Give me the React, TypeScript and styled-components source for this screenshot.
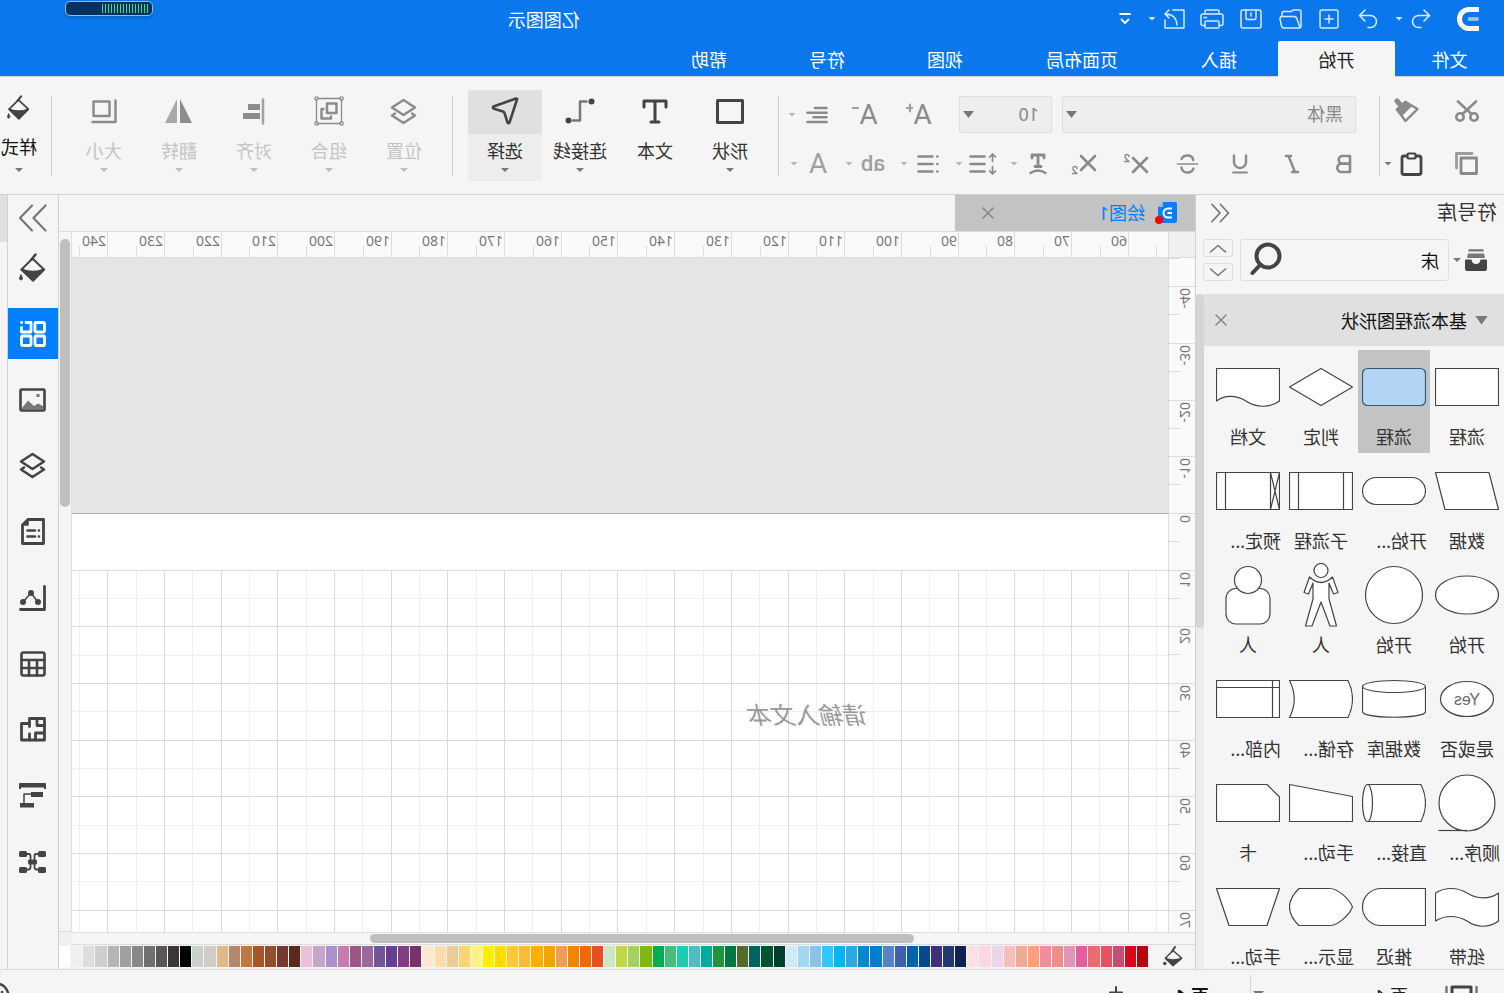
import React, { useEffect, useState } from "react";
import styled, { createGlobalStyle, css } from "styled-components";

const GlobalStyle = createGlobalStyle`
  * { box-sizing: border-box; }
  body {
    margin: 0;
    overflow: hidden;
    font-family: "Noto Sans", "Noto Sans CJK SC", sans-serif;
    font-size: 18px;
    color: #333;
    background: #f5f5f5;
  }
  button, select, input {
    font: inherit;
    color: inherit;
    margin: 0;
    padding: 0;
    border: 0;
    background: none;
  }
  svg { display: block; flex: none; }
`;

/* The whole window is shown flipped left to right. */
const Window = styled.div`
  display: flex;
  flex-direction: column;
  height: 100vh;
  overflow: hidden;
  background: #f5f5f5;
  transform: scaleX(-1);
`;

const Caret = styled.span<{ $w?: number; $h?: number; $color?: string }>`
  flex: none;
  width: ${(p) => p.$w ?? 8}px;
  height: ${(p) => p.$h ?? 4}px;
  background: ${(p) => p.$color ?? "#777"};
  clip-path: polygon(0 0, 100% 0, 50% 100%);
`;

const Spacer = styled.div<{ $grow?: number }>`
  flex: ${(p) => p.$grow ?? 1} 1 0;
`;

/* ---------- title bar ---------- */

const TitleBar = styled.header`
  flex: none;
  display: flex;
  align-items: center;
  height: 41px;
  padding: 0 65px 4px 25px;
  background: #0a77ec;
  color: #fff;
`;

const QuickBar = styled.div`
  display: flex;
  align-items: center;
  margin-left: 17px;
`;

const QuickButton = styled.button<{ $w?: number }>`
  display: flex;
  align-items: center;
  justify-content: center;
  width: ${(p) => p.$w ?? 39}px;
  height: 28px;
`;

const Gap = styled.span<{ $w: number }>`
  flex: none;
  width: ${(p) => p.$w}px;
`;

const AppTitle = styled.h1`
  margin: 2px 0 0;
  font-size: 18px;
  font-weight: 400;
  line-height: 26px;
`;

const Meter = styled.div`
  align-self: flex-start;
  display: flex;
  align-items: center;
  width: 88px;
  height: 15px;
  margin-top: 1px;
  padding: 0 4px;
  border: 1px solid #8dbcf5;
  border-radius: 5px;
  background: #04325f;
  box-shadow: 0 2px 3px rgba(0, 0, 0, 0.15);
`;

const MeterLevel = styled.div`
  width: 46px;
  height: 9px;
  background: repeating-linear-gradient(90deg, #3fdc86 0 1px, transparent 1px 3px);
`;

/* ---------- tabs ---------- */

const TabBar = styled.nav`
  flex: none;
  display: flex;
  height: 35px;
  background: #0a77ec;
`;

const Tab = styled.button<{ $w?: number; $active?: boolean }>`
  position: relative;
  z-index: 1;
  flex: none;
  width: ${(p) => p.$w ?? 118}px;
  height: 36px;
  border-radius: 2px 2px 0 0;
  color: ${(p) => (p.$active ? "#222" : "#fff")};
  background: ${(p) => (p.$active ? "#f5f5f5" : "none")};
`;

/* ---------- ribbon ---------- */

const Ribbon = styled.section`
  flex: none;
  display: flex;
  height: 119px;
  overflow: hidden;
  border-top: 1px solid #d2d4d8;
  border-bottom: 1px solid #d2d2d2;
  background: #f5f5f5;
`;

const Rule = styled.div`
  flex: none;
  width: 1px;
  height: 80px;
  margin-top: 19px;
  background: #d0d0d0;
`;

const RowGroup = styled.div<{ $w: number; $top: number; $gap: number; $left: number }>`
  flex: none;
  display: flex;
  flex-direction: column;
  gap: ${(p) => p.$gap}px;
  width: ${(p) => p.$w}px;
  padding: ${(p) => p.$top}px 0 0 ${(p) => p.$left}px;
  color: #8a8a8a;
`;

const Row = styled.div<{ $gap?: number; $left?: number }>`
  display: flex;
  align-items: center;
  gap: ${(p) => p.$gap ?? 0}px;
  height: 37px;
  padding-left: ${(p) => p.$left ?? 0}px;
`;

const IconButton = styled.button<{ $w: number }>`
  flex: none;
  display: flex;
  align-items: center;
  justify-content: center;
  width: ${(p) => p.$w}px;
  height: 37px;
`;

const SplitButton = styled.button<{ $w: number; $dim?: boolean }>`
  flex: none;
  display: flex;
  align-items: center;
  width: ${(p) => p.$w}px;
  height: 37px;
  color: ${(p) => (p.$dim ? "#a0a0a0" : "inherit")};
`;

const SplitFace = styled.span`
  flex: 1;
  display: flex;
  align-items: center;
  justify-content: center;
`;

const Glyph = styled.span<{ $size: number; $weight?: number }>`
  font-family: Roboto, sans-serif;
  font-size: ${(p) => p.$size}px;
  font-weight: ${(p) => p.$weight ?? 400};
  line-height: 28px;
`;

const SelectBox = styled.label<{ $w: number }>`
  position: relative;
  flex: none;
  display: flex;
  width: ${(p) => p.$w}px;
  height: 37px;
  border: 1px solid #dddee2;
  border-radius: 2px;
  background: #eee;

  select {
    width: 100%;
    padding: 0 20px 2px 12px;
    appearance: none;
    outline: 0;
  }

  ${Caret} {
    position: absolute;
    top: 14px;
    right: 3px;
    pointer-events: none;
  }
`;

const ToolGroup = styled.div<{ $left?: number }>`
  flex: none;
  display: flex;
  gap: 1px;
  padding: 13px 15px 0 ${(p) => p.$left ?? 11}px;
`;

const ToolIcon = styled.span<{ $active?: boolean }>`
  display: flex;
  align-items: center;
  justify-content: center;
  width: 100%;
  height: 44px;
  padding-bottom: 2px;
  color: #444;
  ${(p) => p.$active && css`background: #e0e0e0;`}
`;

const ToolLabel = styled.span`
  line-height: 34px;
`;

const Tool = styled.button<{ $w?: number; $active?: boolean; $disabled?: boolean; $raised?: boolean }>`
  flex: none;
  display: flex;
  flex-direction: column;
  align-items: center;
  width: ${(p) => p.$w ?? 74}px;
  height: 91px;
  border-radius: 2px;
  overflow: hidden;
  white-space: nowrap;
  color: ${(p) => (p.$disabled ? "#c4c4c4" : "#333")};
  ${(p) => p.$active && css`background: #ededed;`}
  ${(p) =>
    p.$raised &&
    css`
      color: #111;
      ${ToolIcon} { height: 36px; }
      ${ToolLabel} { line-height: 42px; }
    `}
`;

/* ---------- workspace ---------- */

const Workspace = styled.main`
  flex: 1;
  display: flex;
  min-height: 0;
`;

const LibraryPanel = styled.aside`
  flex: none;
  display: flex;
  flex-direction: column;
  width: 309px;
  border-right: 1px solid #d0d0d0;
`;

const PanelHead = styled.div`
  flex: none;
  display: flex;
  align-items: center;
  justify-content: space-between;
  height: 36px;
  padding: 0 15px 0 7px;

  h2 {
    margin: 0;
    font-size: 20px;
    font-weight: 400;
    line-height: 36px;
  }
`;

const PlainButton = styled.button`
  display: flex;
  align-items: center;
  justify-content: center;
  color: #777;
`;

const SearchRow = styled.div`
  flex: none;
  display: flex;
  align-items: center;
  height: 42px;
  margin: 8px 7px 13px 17px;
`;

const LibraryButton = styled.button`
  display: flex;
  align-items: center;
  gap: 4px;
  width: 38px;
`;

const SearchBox = styled.label`
  flex: 1;
  display: flex;
  align-items: center;
  min-width: 0;
  height: 42px;
  margin-right: 7px;
  padding: 0 9px 2px 9px;
  border: 1px solid #e0e0e0;
  border-radius: 3px;

  input {
    flex: 1;
    min-width: 0;
    padding-top: 2px;
    outline: 0;
    color: #111;
  }
`;

const Steppers = styled.div`
  display: flex;
  flex-direction: column;
  gap: 6px;
`;

const Stepper = styled.button`
  display: flex;
  align-items: center;
  justify-content: center;
  width: 30px;
  height: 18px;
  border: 1px solid #dedede;
  border-radius: 3px;
`;

const LibraryBody = styled.div`
  flex: 1;
  display: flex;
  min-height: 0;
`;

const LibraryScroll = styled.div`
  flex: 1;
  overflow: hidden;
`;

const SectionHead = styled.div`
  display: flex;
  align-items: center;
  height: 52px;
  padding: 0 11px 0 16px;
  background: #e0e0e0;
  color: #111;

  h3 {
    flex: 1;
    margin: 0 0 0 8px;
    font-size: 18px;
    font-weight: 400;
  }
`;

const ShapeGrid = styled.div`
  display: grid;
  grid-template-columns: repeat(4, 72px);
  gap: 1px;
  padding: 4px 0 0 1px;
`;

const ShapeCell = styled.button<{ $active?: boolean }>`
  display: flex;
  flex-direction: column;
  align-items: center;
  height: 103px;
  padding-top: 5px;
  background: ${(p) => (p.$active ? "#c3c3c3" : "none")};
`;

const ShapeLabel = styled.span<{ $cut?: boolean }>`
  align-self: ${(p) => (p.$cut ? "flex-start" : "center")};
  padding-left: ${(p) => (p.$cut ? 3 : 0)}px;
  line-height: 36px;
  white-space: nowrap;
`;

const LibraryTrack = styled.div`
  flex: none;
  width: 8px;
  background: #ececec;
`;

const LibraryThumb = styled.div`
  height: 334px;
  border-radius: 4px;
  background: #d5d5d5;
`;

/* ---------- document ---------- */

const DocArea = styled.section`
  flex: 1;
  display: flex;
  flex-direction: column;
  min-width: 0;
`;

const DocTabs = styled.div`
  flex: none;
  display: flex;
  height: 37px;
  border-bottom: 1px solid #dcdcdc;
`;

const DocTab = styled.div`
  display: flex;
  align-items: center;
  width: 240px;
  padding: 0 27px 0 18px;
  background: #c3c3c3;
  color: #0080ff;

  span {
    flex: 1;
    margin-left: 9px;
    padding-bottom: 2px;
  }
`;

const DocBody = styled.div`
  flex: 1;
  display: grid;
  grid-template-columns: 27px minmax(0, 1fr) 13px;
  grid-template-rows: 26px minmax(0, 1fr) 13px;
  min-height: 0;
`;

const RulerCorner = styled.div`
  border-right: 1px solid #dcdcdc;
  border-bottom: 1px solid #dcdcdc;
  background: #f0f0f0;
`;

const TopRuler = styled.div`
  display: flex;
  overflow: hidden;
  border-bottom: 1px solid #dcdcdc;
  background: #fafafa;
`;

const TopLead = styled.div`
  flex: none;
  width: 39px;
  background: linear-gradient(#dcdcdc, #dcdcdc) 11px 100% / 1px 11px no-repeat;
`;

const TopCell = styled.div`
  flex: none;
  border-left: 1px solid #dcdcdc;
  padding-left: 1px;
  font-size: 14px;
  line-height: 18px;
  color: #777;
  background: linear-gradient(#dcdcdc, #dcdcdc) 27px 100% / 1px 11px no-repeat;
`;

const SideRuler = styled.div`
  overflow: hidden;
  border-right: 1px solid #dcdcdc;
  background: #fafafa;
`;

const SideLead = styled.div`
  height: 28px;
  background: linear-gradient(#dcdcdc, #dcdcdc) 100% 0 / 11px 1px no-repeat;
`;

const SideCell = styled.div`
  border-top: 1px solid #dcdcdc;
  padding: 1px 0 0 1px;
  font-size: 14px;
  line-height: 18px;
  color: #777;
  background: linear-gradient(#dcdcdc, #dcdcdc) 100% 27px / 11px 1px no-repeat;

  span {
    display: block;
    writing-mode: vertical-rl;
    transform: rotate(180deg);
    width: 18px;
  }
`;

const Canvas = styled.div`
  position: relative;
  overflow: hidden;
  background: #fff;

  svg {
    position: absolute;
    inset: 0;
  }
`;

const CanvasText = styled.div`
  position: absolute;
  left: 299px;
  top: 439px;
  font-size: 24px;
  font-style: italic;
  line-height: 36px;
  color: #999;
`;

const VerticalTrack = styled.div`
  grid-row: 1 / 3;
  grid-column: 3;
  padding: 7px 1px 0;
  border-left: 1px solid #e0e0e0;
  border-bottom: 1px solid #dcdcdc;
`;

const VerticalThumb = styled.div`
  height: 268px;
  border-radius: 5px;
  background: #bfbfbf;
`;

const HorizontalTrack = styled.div`
  grid-column: 1 / 3;
  padding: 1px 0;
  border-top: 1px solid #dcdcdc;
  border-bottom: 1px solid #dcdcdc;
`;

const HorizontalThumb = styled.div`
  width: 48.5%;
  margin-left: 25%;
  height: 9px;
  border-radius: 5px;
  background: #bfbfbf;
`;

const TrackCorner = styled.div`
  background: #f0f0f0;
`;

const Palette = styled.div`
  flex: none;
  display: flex;
  align-items: center;
  gap: 15px;
  height: 24px;
  padding: 0 0 2px 12px;
`;

const Swatches = styled.div`
  flex: 1;
  display: flex;
  gap: 1px;
`;

const Swatch = styled.button<{ $color: string }>`
  flex: 1 1 0;
  height: 21px;
  background: ${(p) => p.$color};
`;

/* ---------- right rail ---------- */

const Rail = styled.aside`
  flex: none;
  display: flex;
  flex-direction: column;
  align-items: center;
  gap: 15px;
  width: 52px;
  border-left: 1px solid #d0d0d0;
  border-right: 1px solid #d0d0d0;
`;

const RailToggle = styled.button`
  display: flex;
  align-items: center;
  justify-content: center;
  width: 50px;
  height: 32px;
  margin: 7px 0 -7px;
  color: #777;
`;

const RailButton = styled.button<{ $active?: boolean }>`
  flex: none;
  display: flex;
  align-items: center;
  justify-content: center;
  width: 50px;
  height: 51px;
  color: ${(p) => (p.$active ? "#fff" : "#444")};
  background: ${(p) => (p.$active ? "#0080ff" : "none")};
`;

const Edge = styled.div`
  flex: none;
  width: 7px;
  background: linear-gradient(#e0e0e0, #e0e0e0) 0 0 / 100% 47px no-repeat;
`;

/* ---------- status bar ---------- */

const StatusBar = styled.footer`
  flex: none;
  height: 24px;
  overflow: hidden;
  border-top: 1px solid #dadada;
`;

const StatusRow = styled.div`
  display: flex;
  align-items: center;
  height: 52px;
  padding-left: 26px;
  white-space: nowrap;
`;

const PageSelect = styled.button`
  display: flex;
  align-items: center;
  justify-content: space-between;
  width: 155px;
  margin: 0 2px 0 37px;
  line-height: 28px;
  color: #222;

  ${Caret} {
    margin-bottom: 4px;
  }
`;

const StatusRule = styled.div`
  width: 1px;
  height: 42px;
  background: #d6d6d6;
`;

const PageTab = styled.button`
  margin: 0 52px 0 41px;
  font-weight: 700;
  line-height: 28px;
  color: #111;
`;

const HelpButton = styled.button`
  flex: none;
  margin-right: -18px;
  color: #444;
`;

/* ---------- icons ---------- */

type IconProps = {
  w: number;
  h: number;
  sw?: number;
  color?: string;
  box?: string;
  children: React.ReactNode;
};

function Icon({ w, h, sw = 2, color = "currentColor", box, children }: IconProps) {
  return (
    <svg
      width={w}
      height={h}
      viewBox={box ?? `0 0 ${w} ${h}`}
      fill="none"
      stroke={color}
      strokeWidth={sw}
      strokeLinecap="round"
      strokeLinejoin="round"
      aria-hidden="true"
    >
      {children}
    </svg>
  );
}

const Bucket = ({ w = 27, h = 29 }: { w?: number; h?: number }) => (
  <Icon w={w} h={h} box="0 0 27 29" sw={2}>
    <path d="M13.5 5.5L2 16.5L13 27.5L24.5 16.5Z" />
    <path d="M2 16.5Q13 21 24.5 16.5L13 27.5Z" fill="currentColor" />
    <path d="M10.5 1.5L14.5 6.5" strokeWidth={2.5} />
    <path d="M25 22Q28 26.500 25 27Q22 26.500 25 22Z" fill="currentColor" strokeWidth={1} />
  </Icon>
);

const Cross = () => (
  <Icon w={12} h={12} sw={1.5} color="#858585">
    <path d="M1 1L11 11M11 1L1 11" />
  </Icon>
);

const layersIcon = (
  <>
    <path d="M13.5 2L25 9.5L13.5 17L2 9.5Z" />
    <path d="M5 15.5L2 17.5L13.5 25L25 17.5L22 15.5" />
  </>
);

/* ---------- symbol previews ---------- */

const shapes: { label: string; cut?: boolean; active?: boolean; art: React.ReactNode }[] = [
  { label: "流程", art: <path d="M.5 13.5H63.5V50.5H.5Z" /> },
  {
    label: "流程",
    active: true,
    art: <rect x=".5" y="13.5" width="63" height="37" rx="5" fill="#b2d5f4" stroke="#35587a" />,
  },
  { label: "判定", art: <path d="M32 13.5L63.5 32L32 50.5L.5 32Z" /> },
  {
    label: "文档",
    art: <path d="M.5 13.5H63.5V46C56 40 44 39.5 34 46C24 53 10 53 .5 46Z" />,
  },
  { label: "数据", art: <path d="M10 13.5H63.5L54 50.5H.5Z" /> },
  { label: "开始...", cut: true, art: <rect x=".5" y="18.5" width="63" height="27" rx="13.5" /> },
  { label: "子流程", art: <path d="M.5 13.5H63.5V50.5H.5ZM9.5 13.5V50.5M54.5 13.5V50.5" /> },
  {
    label: "预定...",
    cut: true,
    art: <path d="M.5 13.5H63.5V50.5H.5ZM9.5 13.5V50.5M54.5 13.5V50.5M.5 13.5L9.5 50.5M9.5 13.5L.5 50.5" />,
  },
  { label: "开始", art: <ellipse cx="32" cy="32" rx="31.5" ry="19" /> },
  { label: "开始", art: <circle cx="32" cy="32" r="28.5" /> },
  {
    label: "人",
    art: (
      <>
        <circle cx="32" cy="7.5" r="7" />
        <path d="M20.5 14Q32 25 43.5 14L49 29.5L44.5 31L40 20V36L47.5 63H41L32 39L23 63H16.5L24 36V20L19.5 31L15 29.5Z" />
      </>
    ),
  },
  {
    label: "人",
    art: (
      <>
        <rect x="10" y="25.5" width="44" height="35.5" rx="10" />
        <circle cx="32" cy="17" r="13.5" />
      </>
    ),
  },
  {
    label: "是或否",
    art: (
      <>
        <ellipse cx="32" cy="32" rx="26.5" ry="17.5" />
        <text x="32" y="38" textAnchor="middle" fontFamily="Liberation Sans, sans-serif" fontSize="16" fill="#666" stroke="none">
          Yes
        </text>
      </>
    ),
  },
  {
    label: "数据库",
    art: (
      <>
        <path d="M.5 19.5V45C3 52 61 52 63.5 45V19.5" />
        <ellipse cx="32" cy="19.5" rx="31.5" ry="6" />
      </>
    ),
  },
  { label: "存储...", cut: true, art: <path d="M5 13.5H63.5Q54 32 63.5 50.5H5Q-4 32 5 13.5Z" /> },
  { label: "内部...", cut: true, art: <path d="M.5 13.5H63.5V50.5H.5ZM7.5 13.5V50.5M.5 20.5H63.5" /> },
  {
    label: "顺序...",
    cut: true,
    art: (
      <>
        <circle cx="32" cy="32" r="28" />
        <path d="M32 59.5H60.5" />
      </>
    ),
  },
  {
    label: "直接...",
    cut: true,
    art: (
      <>
        <path d="M58 13.5H5Q-4 32 5 50.5H58" />
        <ellipse cx="58.5" cy="32" rx="5" ry="18.5" />
      </>
    ),
  },
  { label: "手动...", cut: true, art: <path d="M.5 25.5L63.5 13.5V50.5H.5Z" /> },
  { label: "卡", art: <path d="M.5 26L13 13.5H63.5V50.5H.5Z" /> },
  {
    label: "纸带",
    art: <path d="M.5 18C10 25 22 24 32 18C42 12 54 12 63.5 18V46C54 40 42 40 32 46C22 53 10 53 .5 46Z" />,
  },
  { label: "推迟", art: <path d="M.5 13.5H45A18.5 18.5 0 0 1 45 50.5H.5Z" /> },
  {
    label: "显示...",
    cut: true,
    art: <path d="M.5 32C4 23 16 13.5 23 13.5H54Q73 32 54 50.5H23C16 50.5 4 41 .5 32Z" />,
  },
  { label: "手动...", cut: true, art: <path d="M.5 13.5H63.5L51 50.5H13Z" /> },
];

const paletteColors = `
b20710 d7091c c54f74 e85163 ea6c70 e65d9c e296b5 ee8e86 f08d98 ff9f78 efaa92 f7bebb ead6e8 ffd4e5 fee0e3
0e2350 213a70 402f7b 074989 0065a8 3e60ab 5584c4 007dcd 008acc 2ca8e3 00b5f0 2fc8fa 89c2eb a0d8ef ceeaf6
003f30 005530 00635e 556b2c 007843 20933c 00ac9c 51bdc2 1bccb0 49bb7e 00ae50 7fb90f a5d163 c0d943 cce7c8
e65020 ef6a00 f28500 f29b55 f2a400 ffaf00 ffb938 fbca32 ffdc00 ffee00 fcf285 ffd275 eacb9a ffdcab fee8d0
78306f 833e83 653f96 745499 9a689f 9c5688 cb7aae a992cf c8a5c8 ebc1d9
59291b 753a2f 924d2b a85426 c0773e b5876c dfb987 d3ccc6 c8d2c8
000000 3c3736 585657 707070 888888 9fa1a0 b4b6b5 cdcfce dddddd efefef ffffff`
  .trim()
  .split(/\s+/);

/* ---------- ruler and grid ---------- */

const STEP = 56.69; // ten millimetres at the current zoom
const X0 = 39.3;
const Y0 = 255;
const span = (i: number) => Math.round(X0 + (i + 1) * STEP) - Math.round(X0 + i * STEP);
const drop = (i: number) => Math.round(Y0 + (i + 1) * STEP) - Math.round(Y0 + i * STEP);

/* Panels, rulers and scroll bars that surround the canvas. */
const CHROME_W = 407;
const CHROME_H = 319;

const countMarks = () => ({
  top: Math.max(1, Math.floor((window.innerWidth - CHROME_W - X0 - 26) / STEP) + 1),
  side: Math.max(1, Math.floor((window.innerHeight - CHROME_H - 50) / STEP) + 1),
});

function useMarks() {
  const [marks, setMarks] = useState(countMarks);
  useEffect(() => {
    const update = () => setMarks(countMarks());
    window.addEventListener("resize", update);
    return () => window.removeEventListener("resize", update);
  }, []);
  return marks;
}

function Grid() {
  const columns = Array.from({ length: 80 }, (_, i) => i - 1);
  const rows = Array.from({ length: 40 }, (_, i) => i + 2);
  return (
    <svg width="100%" height="100%" aria-hidden="true" shapeRendering="crispEdges">
      <rect width="100%" height="255" fill="#e5e5e5" />
      <rect y="255" width="100%" height="1" fill="#b2b2b2" />
      {[1, 0].map((minor) => (
        <g key={minor} fill={minor ? "#efefef" : "#dadada"}>
          {columns
            .filter((c) => Math.abs(c % 2) === minor)
            .map((c) => (
              <rect key={c} x={Math.round(X0 + (c * STEP) / 2)} y="312" width="1" height="100%" />
            ))}
          {rows
            .filter((r) => r % 2 === minor)
            .map((r) => (
              <rect key={r} y={Math.round(Y0 + (r * STEP) / 2)} width="100%" height="1" />
            ))}
        </g>
      ))}
    </svg>
  );
}

/* ---------- sections ---------- */

const QUICK = "#d9eaff";

function Header() {
  return (
    <>
      <TitleBar>
        <svg width="22" height="24" viewBox="0 0 22 24" fill="none" aria-hidden="true">
          <path d="M0 2.5H10A9.5 9.5 0 0 1 10 21.5H0" stroke="#fff" strokeWidth="5" />
          <path d="M2 12H9.500" stroke="#8fc2fb" strokeWidth="4" strokeLinecap="round" />
        </svg>
        <QuickBar>
          <QuickButton $w={37} aria-label="撤销">
            <Icon w={20} h={20} sw={1.6} color={QUICK}>
              <path d="M7 1L1.5 6.5L7 12M2 6.5H12.5A6 6 0 0 1 12.5 18.5H10" />
            </Icon>
          </QuickButton>
          <Caret $color={QUICK} />
          <Gap $w={7} />
          <QuickButton aria-label="重做">
            <Icon w={20} h={20} sw={1.6} color={QUICK}>
              <path d="M13 1L18.5 6.5L13 12M18 6.5H7.5A6 6 0 0 0 7.5 18.5H10" />
            </Icon>
          </QuickButton>
          <QuickButton aria-label="新建">
            <Icon w={20} h={20} sw={1.5} color={QUICK}>
              <rect x="1" y="1" width="18" height="18" rx="2" />
              <path d="M10 6V14M6 10H14" />
            </Icon>
          </QuickButton>
          <QuickButton aria-label="打开">
            <Icon w={23} h={20} sw={1.5} color={QUICK}>
              <path d="M20 7.5V5Q20 2.5 18 2.5H11L8.5 1H2.5Q1 1 1 2.5V17Q1 19 3 19H18Q20 19 20.5 17L22 10Q22 7.5 20 7.5H8Q5.5 7.5 5 10L2 18.5" />
            </Icon>
          </QuickButton>
          <QuickButton aria-label="保存">
            <Icon w={22} h={20} sw={1.5} color={QUICK}>
              <rect x="1" y="1" width="20" height="18" rx="2" />
              <path d="M6 1V9Q6 10.5 7.5 10.5H14.5Q16 10.5 16 9V1M11 4V7" />
            </Icon>
          </QuickButton>
          <QuickButton aria-label="打印">
            <Icon w={24} h={20} sw={1.5} color={QUICK}>
              <path d="M5 5V2.5Q5 1 6.5 1H17.5Q19 1 19 2.5V5M5 16.5H3Q1 16.5 1 14.5V7Q1 5 3 5H21Q23 5 23 7V14.5Q23 16.5 21 16.5H19M17.5 8.5H20" />
              <rect x="5" y="12" width="14" height="7" rx="1" />
            </Icon>
          </QuickButton>
          <QuickButton $w={37} aria-label="导出">
            <Icon w={21} h={20} sw={1.5} color={QUICK}>
              <path d="M12 1H1V19H20V11M16 1L20 5L16 9M19.5 5Q9 5 8 16" />
            </Icon>
          </QuickButton>
          <Caret $color={QUICK} />
          <Gap $w={10} />
          <QuickButton $w={26} aria-label="自定义">
            <Icon w={12} h={12} sw={1.8} color="#fff">
              <path d="M1 1H11M2.5 6.5L6 10L9.5 6.5" />
            </Icon>
          </QuickButton>
        </QuickBar>
        <Spacer $grow={3} />
        <AppTitle>亿图图示</AppTitle>
        <Spacer $grow={2} />
        <Meter>
          <MeterLevel />
        </Meter>
      </TitleBar>
      <TabBar>
        <Tab $w={109}>文件</Tab>
        <Tab $w={117} $active>
          开始
        </Tab>
        <Tab>插入</Tab>
        <Tab $w={156}>页面布局</Tab>
        <Tab>视图</Tab>
        <Tab>符号</Tab>
        <Tab>帮助</Tab>
      </TabBar>
    </>
  );
}

const insertTools = [
  {
    label: "形状",
    menu: true,
    icon: (
      <Icon w={28} h={25} sw={3}>
        <rect x="1.5" y="1.5" width="25" height="22" />
      </Icon>
    ),
  },
  {
    label: "文本",
    icon: (
      <Icon w={26} h={25} sw={3}>
        <path d="M2 8V2H24V8M13 2V23M9 23H17" />
      </Icon>
    ),
  },
  {
    label: "连接线",
    menu: true,
    icon: (
      <Icon w={30} h={26} sw={2.5} color="#777">
        <path d="M8.5 3.5H15V22.5H22" />
        <circle cx="3.5" cy="3.5" r="3" fill="#444" stroke="none" />
        <circle cx="26.5" cy="22.5" r="3" fill="#444" stroke="none" />
      </Icon>
    ),
  },
  {
    label: "选择",
    menu: true,
    active: true,
    icon: (
      <Icon w={28} h={28} sw={2.6}>
        <path d="M2 2.5Q1.5 1.5 3 1.5L25.5 9.5Q27 10.5 25 11.8L16 14.5Q14.8 15 14.3 16.5L11.5 25.5Q10.5 27 9.5 25.5Z" />
      </Icon>
    ),
  },
];

const arrangeTools = [
  {
    label: "位置",
    icon: (
      <Icon w={27} h={27} sw={2.5} color="#8c8c8c">
        {layersIcon}
      </Icon>
    ),
  },
  {
    label: "组合",
    icon: (
      <Icon w={30} h={30} sw={1.3} color="#8c8c8c">
        <path d="M4 2.5H26M4 27.5H26M2.5 4V26M27.5 4V26" />
        <circle cx="2.5" cy="2.5" r="1.7" />
        <circle cx="27.5" cy="2.5" r="1.7" />
        <circle cx="2.5" cy="27.5" r="1.7" />
        <circle cx="27.5" cy="27.5" r="1.7" />
        <rect x="7.5" y="7.5" width="9.5" height="9.5" strokeWidth="2.5" />
        <path d="M13 20.5V22.5H22.5V13H20.5" strokeWidth="2.5" />
      </Icon>
    ),
  },
  {
    label: "对齐",
    icon: (
      <Icon w={22} h={27} sw={2.5} color="#a2a2a2">
        <path d="M2 1.5V25.5" />
        <path d="M5 6H17V12H5ZM5 15H22V21H5Z" fill="#8c8c8c" stroke="none" />
      </Icon>
    ),
  },
  {
    label: "翻转",
    icon: (
      <Icon w={27} h={25}>
        <path d="M12 0V24H0Z" fill="#8c8c8c" stroke="none" />
        <path d="M15 0V24H27Z" fill="#a8a8a8" stroke="none" />
      </Icon>
    ),
  },
  {
    label: "大小",
    icon: (
      <Icon w={26} h={25} sw={2.5} color="#8c8c8c">
        <rect x="7.5" y="2.5" width="16" height="14.5" />
        <path d="M1.5 1.5V23H24.5" />
      </Icon>
    ),
  },
];

function RibbonBar() {
  const dim = "#b4b4b4";
  return (
    <Ribbon>
      <RowGroup $w={124} $top={15} $gap={16} $left={12}>
        <Row $gap={10}>
          <IconButton $w={50} aria-label="剪切">
            <Icon w={24} h={22} sw={2.6}>
              <circle cx="5" cy="17" r="3.7" />
              <circle cx="19" cy="17" r="3.7" />
              <path d="M7.5 14L21 1.5M16.5 14L3 1.5" />
            </Icon>
          </IconButton>
          <IconButton $w={50} aria-label="格式刷">
            <Icon w={25} h={25} sw={2.4}>
              <path d="M13.5 4L1.5 11L13.5 23L22 11.5Z" />
              <path d="M13.5 4L8.5 8L17.5 17L22 11.5Z" fill="currentColor" />
              <path d="M19 6.5L22 3" strokeWidth="5" />
            </Icon>
          </IconButton>
        </Row>
        <Row $gap={10}>
          <IconButton $w={50} aria-label="复制">
            <Icon w={23} h={23} sw={2.8}>
              <rect x="1.5" y="6" width="15.5" height="15.5" />
              <path d="M6 1.5H21.5V16" stroke="#9c9c9c" />
            </Icon>
          </IconButton>
          <SplitButton $w={48} aria-label="粘贴">
            <SplitFace>
              <Icon w={23} h={24} sw={2.8} color="#444">
                <rect x="2" y="4" width="19" height="18.5" rx="2" />
                <rect x="7.5" y="1.5" width="8" height="5" rx="1" fill="#f5f5f5" strokeWidth="2.2" />
              </Icon>
            </SplitFace>
            <Caret />
          </SplitButton>
        </Row>
      </RowGroup>
      <Rule />
      <RowGroup $w={600} $top={19} $gap={12} $left={9}>
        <Row $left={14}>
          <SelectBox $w={294}>
            <select aria-label="字体" defaultValue="黑体">
              <option>黑体</option>
            </select>
            <Caret $w={11} $h={7} />
          </SelectBox>
          <Gap $w={10} />
          <SelectBox $w={93}>
            <select aria-label="字号" defaultValue="10">
              <option>10</option>
            </select>
            <Caret $w={11} $h={7} />
          </SelectBox>
          <Gap $w={13} />
          <IconButton $w={54} aria-label="增大字号">
            <Glyph $size={28}>A</Glyph>
            <Icon w={7} h={24} sw={2.2} color="#a0a0a0">
              <path d="M3 1.5V8.500M0 5H6" />
            </Icon>
          </IconButton>
          <IconButton $w={54} aria-label="减小字号">
            <Glyph $size={28}>A</Glyph>
            <Icon w={7} h={24} sw={2.2} color="#a0a0a0">
              <path d="M0 5H6" />
            </Icon>
          </IconButton>
          <SplitButton $w={50} aria-label="对齐方式">
            <SplitFace>
              <Icon w={22} h={18} sw={2.6}>
                <path d="M1.5 2H13M1.5 6.7H20.5M1.5 11.3H14.5M1.5 16H20.5" />
              </Icon>
            </SplitFace>
            <Caret $color={dim} />
          </SplitButton>
        </Row>
        <Row>
          <IconButton $w={52} aria-label="加粗">
            <Icon w={16} h={20} sw={2.6}>
              <path d="M2 2H9.5A3.8 3.8 0 0 1 9.5 9.6H2ZM2 9.6H10.5A4.2 4.2 0 0 1 10.5 18H2Z" />
            </Icon>
          </IconButton>
          <IconButton $w={52} aria-label="斜体">
            <Icon w={16} h={20} sw={2.4}>
              <path d="M9 2H14M2 18H8M11.5 2L5 18" />
            </Icon>
          </IconButton>
          <IconButton $w={52} aria-label="下划线">
            <Icon w={18} h={20} sw={2.4}>
              <path d="M3 1.5V8A6 6 0 0 0 15 8V1.5" />
              <path d="M2 18.5H16" strokeWidth="1.8" />
            </Icon>
          </IconButton>
          <IconButton $w={52} aria-label="删除线">
            <Icon w={23} h={20} sw={2.4}>
              <path d="M17.5 5Q16 1.5 11.5 1.5Q6.5 1.5 5.8 6M5.5 14.5Q7 18.5 11.5 18.5Q17 18.5 17.5 13.5" />
              <path d="M1.5 10H21.5" strokeWidth="1.6" />
            </Icon>
          </IconButton>
          <IconButton $w={52} aria-label="上标">
            <Icon w={26} h={22} sw={2.6}>
              <path d="M2 5L16 19M16 5L2 19" />
              <path d="M20 3.5Q20 1.5 22 1.5Q24.5 1.5 24 4Q23.5 5.5 20 8.5H24.5" strokeWidth="1.4" />
            </Icon>
          </IconButton>
          <IconButton $w={52} aria-label="下标">
            <Icon w={26} h={22} sw={2.6}>
              <path d="M2 3L16 17M16 3L2 17" />
              <path d="M20 15.5Q20 13.5 22 13.5Q24.5 13.5 24 16Q23.5 17.5 20 20.5H24.5" strokeWidth="1.4" />
            </Icon>
          </IconButton>
          <Row $gap={7}>
            <SplitButton $w={48} aria-label="文字方向">
              <SplitFace>
                <Icon w={18} h={22} sw={2.4}>
                  <path d="M3 5V2H15V5M9 2V13M6 13.5H12" strokeWidth="2.8" />
                  <path d="M1.5 20Q9 15 16.5 20" />
                </Icon>
              </SplitFace>
              <Caret $color={dim} />
            </SplitButton>
            <SplitButton $w={48} aria-label="行距">
              <SplitFace>
                <Icon w={28} h={22} sw={2.6}>
                  <path d="M12.5 3.5H26.5M12.5 11H26.5M12.5 18.5H26.5" />
                  <path d="M4.5 1V8.5M1.5 4L4.5 1L7.5 4M4.5 13.5V21M1.5 18L4.5 21L7.5 18" strokeWidth="1.7" />
                </Icon>
              </SplitFace>
              <Caret $color={dim} />
            </SplitButton>
            <SplitButton $w={48} aria-label="项目符号">
              <SplitFace>
                <Icon w={22} h={20} sw={2.6}>
                  <path d="M6.5 2.5H20.5M6.5 10H20.5M6.5 17.5H20.5M1.5 2.5H1.6M1.5 10H1.6M1.5 17.5H1.6" />
                </Icon>
              </SplitFace>
              <Caret $color={dim} />
            </SplitButton>
            <SplitButton $w={48} $dim aria-label="文本突出显示">
              <SplitFace>
                <Glyph $size={22} $weight={500}>
                  ab
                </Glyph>
              </SplitFace>
              <Caret $color={dim} />
            </SplitButton>
            <SplitButton $w={48} $dim aria-label="字体颜色">
              <SplitFace>
                <Glyph $size={28}>A</Glyph>
              </SplitFace>
              <Caret $color={dim} />
            </SplitButton>
          </Row>
        </Row>
      </RowGroup>
      <Rule />
      <ToolGroup>
        {insertTools.map((t) => (
          <Tool key={t.label} $active={t.active}>
            <ToolIcon $active={t.active}>{t.icon}</ToolIcon>
            <ToolLabel>{t.label}</ToolLabel>
            {t.menu && <Caret />}
          </Tool>
        ))}
      </ToolGroup>
      <Rule />
      <ToolGroup>
        {arrangeTools.map((t) => (
          <Tool key={t.label} $disabled>
            <ToolIcon>{t.icon}</ToolIcon>
            <ToolLabel>{t.label}</ToolLabel>
            <Caret $color="#bdbdbd" />
          </Tool>
        ))}
      </ToolGroup>
      <Rule />
      <ToolGroup>
        <Tool $w={42} $raised>
          <ToolIcon>
            <Bucket w={23} h={25} />
          </ToolIcon>
          <ToolLabel>样式</ToolLabel>
          <Caret />
        </Tool>
      </ToolGroup>
    </Ribbon>
  );
}

function Library() {
  return (
    <LibraryPanel>
      <PanelHead>
        <h2>符号库</h2>
        <PlainButton aria-label="折叠">
          <Icon w={19} h={20} sw={1.8}>
            <path d="M9.5 1.5L1.5 10L9.5 18.5M18 1.5L10 10L18 18.5" />
          </Icon>
        </PlainButton>
      </PanelHead>
      <SearchRow>
        <LibraryButton aria-label="符号库菜单">
          <Icon w={22} h={22} sw={2.4} color="#777">
            <path d="M4.5 1.4H17.5" />
            <path d="M3 4.5H19L20 9H2Z" fill="#777" stroke="none" />
            <path d="M1 10.5H6.5Q7 15 11 15Q15 15 15.5 10.5H21Q22 10.5 22 11.5V20Q22 22 20 22H2Q0 22 0 20V11.5Q0 10.5 1 10.5Z" fill="#444" stroke="none" />
          </Icon>
          <Caret />
        </LibraryButton>
        <SearchBox>
          <input type="text" aria-label="搜索符号" defaultValue="床" />
          <Icon w={32} h={34} sw={4} color="#444">
            <circle cx="14" cy="14" r="11.5" />
            <path d="M21.5 22.5L29.5 31" />
          </Icon>
        </SearchBox>
        <Steppers>
          <Stepper aria-label="上一个">
            <Icon w={18} h={9} sw={1.6} color="#777">
              <path d="M1.5 8L9 1.5L16.5 8" />
            </Icon>
          </Stepper>
          <Stepper aria-label="下一个">
            <Icon w={18} h={9} sw={1.6} color="#777">
              <path d="M1.5 1L9 7.5L16.5 1" />
            </Icon>
          </Stepper>
        </Steppers>
      </SearchRow>
      <LibraryBody>
        <LibraryScroll>
          <SectionHead>
            <Caret $w={13} $h={9} />
            <h3>基本流程图形状</h3>
            <PlainButton aria-label="关闭">
              <Cross />
            </PlainButton>
          </SectionHead>
          <ShapeGrid>
            {shapes.map((s, i) => (
              <ShapeCell key={i} $active={s.active}>
                <svg width="64" height="64" viewBox="0 0 64 64" fill="#fff" stroke="#444" strokeWidth="1.2" strokeLinejoin="round" aria-hidden="true">
                  {s.art}
                </svg>
                <ShapeLabel $cut={s.cut}>{s.label}</ShapeLabel>
              </ShapeCell>
            ))}
          </ShapeGrid>
        </LibraryScroll>
        <LibraryTrack>
          <LibraryThumb />
        </LibraryTrack>
      </LibraryBody>
    </LibraryPanel>
  );
}

function Document() {
  const marks = useMarks();
  const topMarks = Array.from({ length: marks.top }, (_, i) => i);
  const sideMarks = Array.from({ length: marks.side }, (_, i) => i - 4);
  return (
    <DocArea>
      <DocTabs>
        <DocTab>
          <Icon w={23} h={22} sw={2}>
            <path d="M2 0H14L19 5V19Q19 21 17 21H2Q0 21 0 19V2Q0 0 2 0Z" fill="#0080ff" stroke="none" />
            <path d="M14 0V5H19Z" fill="#8fc2fb" stroke="none" />
            <path d="M5 6.5H9A4.5 4.5 0 0 1 9 15.5H5M5 11H9.5" stroke="#fff" strokeLinecap="butt" />
            <circle cx="18" cy="18" r="4" fill="#f00" stroke="none" />
          </Icon>
          <span>绘图1</span>
          <PlainButton aria-label="关闭绘图">
            <Cross />
          </PlainButton>
        </DocTab>
      </DocTabs>
      <DocBody>
        <RulerCorner />
        <TopRuler>
          <TopLead />
          {topMarks.map((i) => (
            <TopCell key={i} style={{ width: span(i) }}>
              {60 + i * 10}
            </TopCell>
          ))}
        </TopRuler>
        <VerticalTrack>
          <VerticalThumb />
        </VerticalTrack>
        <SideRuler>
          <SideLead />
          {sideMarks.map((i) => (
            <SideCell key={i} style={{ height: drop(i) }}>
              <span>{i * 10}</span>
            </SideCell>
          ))}
        </SideRuler>
        <Canvas>
          <Grid />
          <CanvasText>请输入文本</CanvasText>
        </Canvas>
        <HorizontalTrack>
          <HorizontalThumb />
        </HorizontalTrack>
        <TrackCorner />
      </DocBody>
      <Palette>
        <PlainButton aria-label="填充颜色">
          <Icon w={20} h={21} sw={1.5} color="#444">
            <path d="M10 4.5L1.5 12L10 19.5L17.5 12Z" />
            <path d="M1.5 12.5Q10 15.5 17.5 12.5L10 19.5Z" fill="#444" />
            <path d="M8 1L11 5.5" strokeWidth="2" />
            <circle cx="18.2" cy="17.5" r="1" fill="#444" />
          </Icon>
        </PlainButton>
        <Swatches>
          {paletteColors.map((c) => (
            <Swatch key={c} $color={`#${c}`} aria-label={`#${c}`} />
          ))}
        </Swatches>
      </Palette>
    </DocArea>
  );
}

const railTools: { name: string; active?: boolean; icon: React.ReactNode }[] = [
  { name: "填充", icon: <Bucket /> },
  {
    name: "符号",
    active: true,
    icon: (
      <Icon w={26} h={26} sw={2.8}>
        <rect x="1.5" y="1.5" width="9.5" height="9.5" rx="1" />
        <rect x="1.5" y="15" width="9.5" height="9.5" rx="1" />
        <rect x="15" y="15" width="9.5" height="9.5" rx="1" />
        <path d="M20 1.5H15V11H24.5V6.5M24.3 1.5H24.5" />
      </Icon>
    ),
  },
  {
    name: "图片",
    icon: (
      <Icon w={27} h={24} sw={2.6}>
        <rect x="1.5" y="1.5" width="24" height="21" rx="1" />
        <path d="M3 21V18L8 15.5L12 18L18 12.5L24 20V21Z" fill="#777" stroke="none" />
        <rect x="6.5" y="6" width="3" height="3" fill="#777" stroke="none" />
      </Icon>
    ),
  },
  {
    name: "图层",
    icon: (
      <Icon w={27} h={27} sw={2.6}>
        {layersIcon}
      </Icon>
    ),
  },
  {
    name: "备注",
    icon: (
      <Icon w={24} h={27} sw={2.8}>
        <path d="M1.5 1.5H17L22.5 7V25.5H1.5Z" />
        <path d="M17 1.5V7H22.5Z" fill="currentColor" strokeWidth="1.5" />
        <path d="M10 12.5H17.5M10 18.5H17.5M6 12.5H6.1M6 18.5H6.1" strokeWidth="2.6" />
      </Icon>
    ),
  },
  {
    name: "图表",
    icon: (
      <Icon w={27} h={26} sw={2.8}>
        <path d="M1.5 1.5V24.5H25.5" />
        <path d="M8 17L15 8L23 17" strokeWidth="1.5" />
        <g fill="currentColor" stroke="none">
          <circle cx="8" cy="17" r="3" />
          <circle cx="15" cy="8" r="3" />
          <circle cx="23" cy="17" r="3" />
        </g>
      </Icon>
    ),
  },
  {
    name: "表格",
    icon: (
      <Icon w={26} h={26} sw={2.6}>
        <rect x="1.5" y="1.5" width="23" height="23" rx="2" />
        <path d="M1.5 9H24.5M1.5 17H24.5M9 9V24.5M17 9V24.5" />
      </Icon>
    ),
  },
  {
    name: "平面图",
    icon: (
      <Icon w={26} h={25} sw={2.8}>
        <path d="M1.5 1.5H16.5V6.5H24.5V23H1.5Z" />
        <path d="M16.5 6.5V9.5M16.5 17V23M9 2V8.5H2M10.5 23V16H2" />
      </Icon>
    ),
  },
  {
    name: "甘特图",
    icon: (
      <Icon w={27} h={25} sw={1.5}>
        <path d="M0 1Q0 0 1 0H26Q27 0 27 1V6H25V4.5H2V6H0ZM3 9H15V14H3ZM12 20H26V24.5H12Z" fill="currentColor" stroke="none" />
        <path d="M15 11H22V20" />
      </Icon>
    ),
  },
  {
    name: "思维导图",
    icon: (
      <Icon w={27} h={24} sw={1.8}>
        <path d="M7 4H10Q11.5 4 11.5 6V17Q11.5 19.5 9.5 19.5H7M20 4H17Q15.5 4 15.5 6V17Q15.5 19.5 17.5 19.5H20" />
        <g fill="currentColor" stroke="none">
          <rect x="0" y="1" width="8" height="6" rx="1.5" />
          <rect x="19" y="1" width="8" height="6" rx="1.5" />
          <rect x="0" y="17" width="8" height="6" rx="1.5" />
          <rect x="19" y="17" width="8" height="6" rx="1.5" />
          <rect x="9" y="9.5" width="9" height="5" rx="1.5" />
        </g>
      </Icon>
    ),
  },
];

export default function App() {
  return (
    <>
      <GlobalStyle />
      <Window>
        <Header />
        <RibbonBar />
        <Workspace>
          <Library />
          <Document />
          <Rail>
            <RailToggle aria-label="折叠面板">
              <Icon w={28} h={28} sw={2.2}>
                <path d="M1.5 1.5L13.5 14L1.5 26.5M15 1.5L27 14L15 26.5" />
              </Icon>
            </RailToggle>
            {railTools.map((t) => (
              <RailButton key={t.name} $active={t.active} aria-label={t.name}>
                {t.icon}
              </RailButton>
            ))}
          </Rail>
          <Edge />
        </Workspace>
        <StatusBar>
          <StatusRow>
            <Icon w={33} h={24} sw={3} color="#444">
              <rect x="7" y="3" width="19" height="20" />
              <path d="M1.5 3V22M31.5 3V22" stroke="#777" strokeWidth="2.5" />
            </Icon>
            <PageSelect>
              页-1
              <Caret $w={11} $h={6} />
            </PageSelect>
            <StatusRule />
            <PageTab>页-1</PageTab>
            <PlainButton aria-label="添加页">
              <Icon w={14} h={22} sw={2} color="#444">
                <path d="M7 2V14M1 7.500H13" />
              </Icon>
            </PlainButton>
            <Spacer />
            <HelpButton aria-label="帮助">
              <Icon w={28} h={28} sw={2.5}>
                <circle cx="14" cy="14" r="12.5" />
                <path d="M8 10V14" />
              </Icon>
            </HelpButton>
          </StatusRow>
        </StatusBar>
      </Window>
    </>
  );
}
